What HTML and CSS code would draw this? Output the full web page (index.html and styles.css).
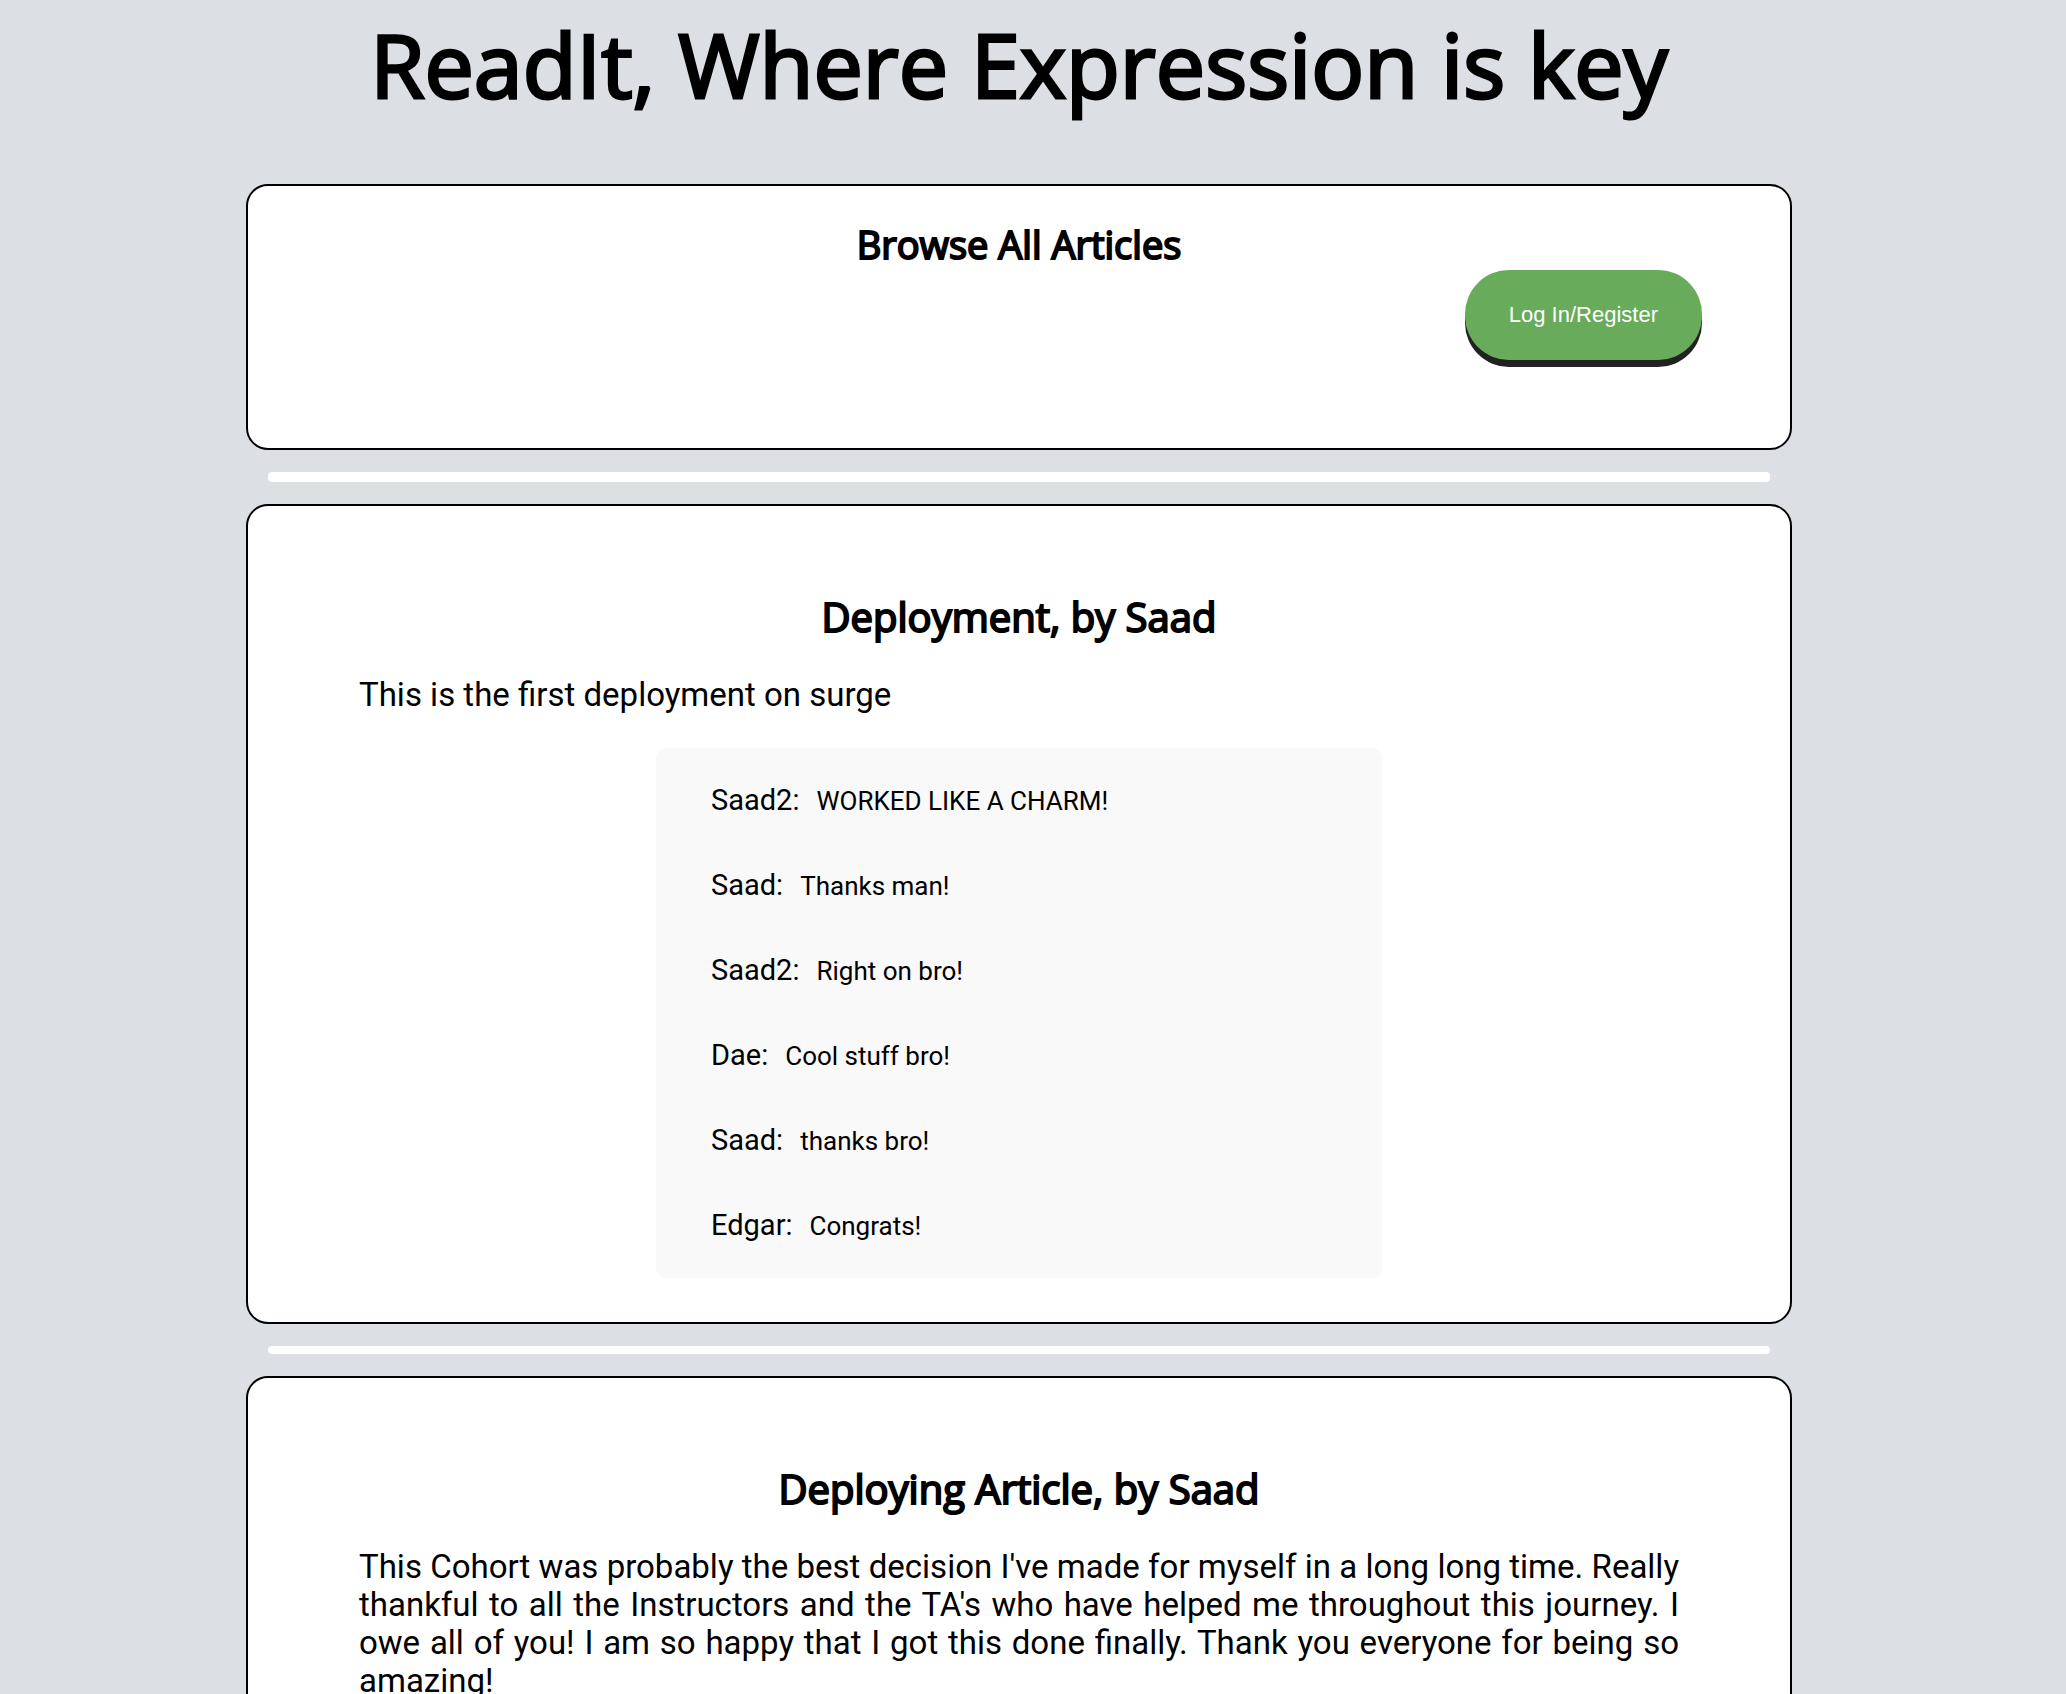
FILE: index.html
```html
<!DOCTYPE html>
<html lang="en">
<head>
<meta charset="utf-8">
<title>ReadIt</title>
<link rel="stylesheet" href="styles.css">
</head>
<body>
<div class="page">
  <h1 class="title">ReadIt, Where Expression is key</h1>
  <header class="card toolbar">
    <h2 class="heading heading-small">Browse All Articles</h2>
    <button class="login" type="button">Log In/Register</button>
  </header>
  <hr class="divider divider-first">
  <article class="card article">
    <h2 class="heading">Deployment, by Saad</h2>
    <p class="text">This is the first deployment on surge</p>
    <ul class="comments">
      <li class="comment"><span class="author">Saad2:</span><span>WORKED LIKE A CHARM!</span></li>
      <li class="comment"><span class="author">Saad:</span><span>Thanks man!</span></li>
      <li class="comment"><span class="author">Saad2:</span><span>Right on bro!</span></li>
      <li class="comment"><span class="author">Dae:</span><span>Cool stuff bro!</span></li>
      <li class="comment"><span class="author">Saad:</span><span>thanks bro!</span></li>
      <li class="comment"><span class="author">Edgar:</span><span>Congrats!</span></li>
    </ul>
  </article>
  <hr class="divider">
  <article class="card article">
    <h2 class="heading">Deploying Article, by Saad</h2>
    <p class="text">This Cohort was probably the best decision I've made for myself in a long long time. Really thankful to all the Instructors and the TA's who have helped me throughout this journey. I owe all of you! I am so happy that I got this done finally. Thank you everyone for being so amazing!</p>
  </article>
</div>
</body>
</html>
```
FILE: styles.css
```css
* {
  box-sizing: border-box;
}

html {
  background: #dcdfe4;
  scrollbar-width: none;
}

body {
  margin: 0;
  padding-right: 28px;
  color: #000;
  font-family: Roboto, sans-serif;
}

.page {
  width: 76%;
  max-width: 1546px;
  margin: 0 auto;
}

.title,
.heading {
  margin: 0;
  font-family: "Open Sans", sans-serif;
  font-weight: 400;
  text-align: center;
}

.title {
  padding: 4px 0 60px;
  font-size: 88px;
  line-height: 120px;
  -webkit-text-stroke: 3px #000;
}

.heading {
  font-size: 40px;
  line-height: 52px;
  -webkit-text-stroke: 2px #000;
}

.heading-small {
  font-size: 38px;
}

.card {
  border: 2px solid #000;
  border-radius: 22px;
  background: #fff;
}

.toolbar {
  display: flex;
  flex-direction: column;
  padding: 32px 88px 88px;
}

.login {
  align-self: flex-end;
  height: 90px;
  padding: 0 44px;
  border: 0;
  border-radius: 44px;
  background: #67ab5b;
  box-shadow: 0 7px #222;
  color: #fff;
  font: 22px "Liberation Sans", Arial, sans-serif;
}

.divider {
  height: 8px;
  margin: 22px;
  border: 0;
  border-radius: 4px;
  background: #fff;
}

.divider-first {
  height: 10px;
}

.article {
  padding: 85px 111px 44px;
}

.text {
  margin: 33px 0 0;
  font-size: 33px;
  line-height: 38px;
  text-align: justify;
}

.comments {
  width: 55%;
  margin: 34px auto 0;
  padding: 10px 55px;
  border-radius: 10px;
  background: #f9f9f9;
  list-style: none;
}

.comment {
  display: flex;
  align-items: baseline;
  gap: 17px;
  height: 85px;
  font-size: 26px;
  line-height: 84px;
}

.author {
  font-size: 29px;
}
```
